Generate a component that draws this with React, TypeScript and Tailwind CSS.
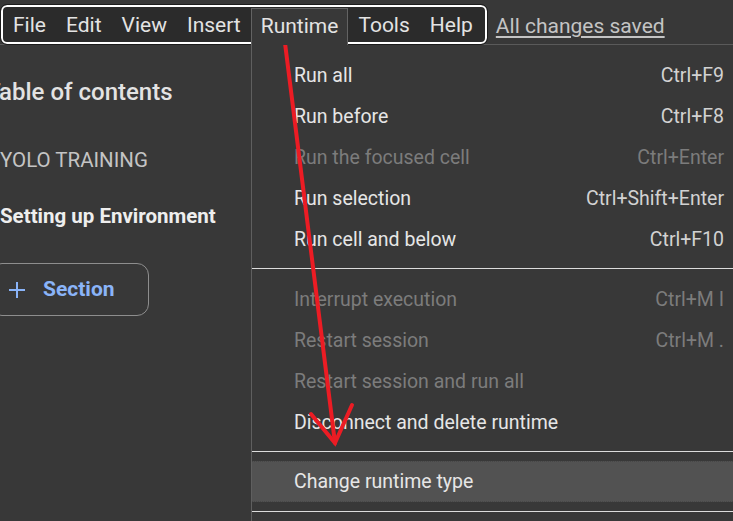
type Item = { label: string; shortcut?: string; disabled?: boolean; active?: boolean }

const groups: Item[][] = [
  [
    { label: "Run all", shortcut: "Ctrl+F9" },
    { label: "Run before", shortcut: "Ctrl+F8" },
    { label: "Run the focused cell", shortcut: "Ctrl+Enter", disabled: true },
    { label: "Run selection", shortcut: "Ctrl+Shift+Enter" },
    { label: "Run cell and below", shortcut: "Ctrl+F10" },
  ],
  [
    { label: "Interrupt execution", shortcut: "Ctrl+M I", disabled: true },
    { label: "Restart session", shortcut: "Ctrl+M .", disabled: true },
    { label: "Restart session and run all", disabled: true },
    { label: "Disconnect and delete runtime" },
  ],
  [{ label: "Change runtime type", active: true }],
]

const menus = ["File", "Edit", "View", "Insert", "Runtime", "Tools", "Help"]

export default function App() {
  return (
    <div className="relative h-[521px] w-[733px] overflow-hidden bg-[#383838] font-['Roboto',sans-serif] text-[#e3e3e3]">
      {/* top bar */}
      <header className="flex h-[45px] items-start border-b border-[#5a5a5a]">
        <nav className="ml-[1px] mt-[5px] flex h-[39px] items-stretch gap-[20px] rounded-[6px] border-2 border-white bg-[#2b2b2b] pl-[10px] pr-[12px] pt-[2px] outline outline-1 outline-[#1c1c1c]">
          {menus.map((m) =>
            m === "Runtime" ? (
              <div
                key={m}
                className="relative z-10 -mx-[10px] -mb-[3px] -mt-[1px] flex items-center border border-b-0 border-[#636363] bg-[#383838] pl-[9px] pr-[9px] text-[21px] text-[#e3e3e3]"
              >
                {m}
              </div>
            ) : (
              <div key={m} className="flex items-center text-[21px] text-[#e3e3e3]">
                {m}
              </div>
            )
          )}
        </nav>
        <span className="ml-[9px] mt-[12px] text-[21px] leading-[28px] text-[#c4c4c4] underline underline-offset-[3px]">
          All changes saved
        </span>
      </header>

      <div className="flex h-[476px]">
        {/* sidebar */}
        <aside className="w-[251px] shrink-0 overflow-hidden">
          <h2 className="-ml-[14px] mt-[32px] whitespace-nowrap text-[24px] font-medium leading-[30px] text-[#e3e3e3]">
            Table of contents
          </h2>
          <p className="mt-[40px] text-[20.5px] leading-[26px] text-[#c4c4c4]">YOLO TRAINING</p>
          <p className="mt-[30px] whitespace-nowrap text-[20.5px] font-bold leading-[26px] text-[#eeeeee]">
            Setting up Environment
          </p>
          <button className="-ml-[10px] mt-[34px] flex h-[53px] w-[159px] items-center gap-[18px] rounded-[12px] border border-[#8e8e8e] pl-[18px] text-[21px] font-bold text-[#8ab4f8]">
            <svg width="16" height="16" viewBox="0 0 16 16" fill="none" stroke="#8ab4f8" strokeWidth="2">
              <path d="M8 0v16M0 8h16" />
            </svg>
            Section
          </button>
        </aside>

        {/* runtime menu */}
        <section className="flex-1 border-l border-[#5f5f5f] pt-[10px]">
          {groups.map((g, gi) => (
            <div key={gi}>
              {gi > 0 && <div className="h-px bg-[#dcdcdc]" />}
              <div className={gi === 0 ? "pb-[8px]" : gi === 1 ? "pt-[10px] pb-[8px]" : "pt-[9px] pb-[9px]"}>
                {g.map((it) => (
                  <div
                    key={it.label}
                    className={[
                      "flex h-[41px] items-center justify-between pl-[42px] pr-[9px] text-[19.5px]",
                      it.active ? "border-y border-dotted border-[#474747] bg-[#525252]" : "",
                      it.disabled ? "text-[#7c7c7c]" : "text-[#e6e6e6]",
                    ].join(" ")}
                  >
                    <span>{it.label}</span>
                    {it.shortcut && (
                      <span className={it.disabled ? "text-[#7c7c7c]" : "text-[#d2d2d2]"}>{it.shortcut}</span>
                    )}
                  </div>
                ))}
              </div>
            </div>
          ))}
          <div className="h-px bg-[#dcdcdc]" />
        </section>
      </div>

      {/* red annotation arrow */}
      <svg className="pointer-events-none absolute inset-0" width="733" height="521" viewBox="0 0 733 521">
        <g stroke="#ec1c24" strokeWidth="4" strokeLinecap="round" fill="none">
          <path d="M285 43 L335 443" />
          <path d="M311 414 L335 443 L352 405" />
        </g>
      </svg>
    </div>
  )
}
